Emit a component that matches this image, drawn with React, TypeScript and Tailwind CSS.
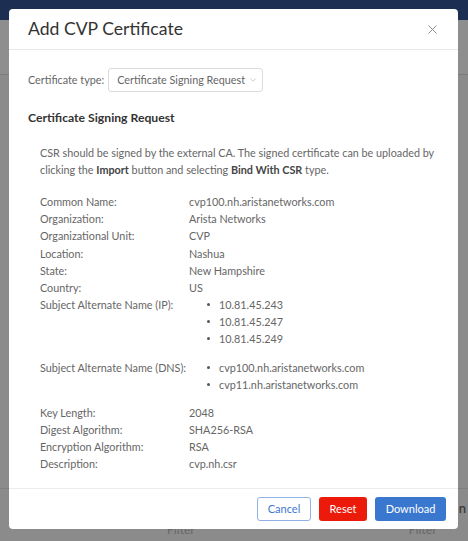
import { X, ChevronDown } from "lucide-react";

const details: [string, string][] = [
  ["Common Name:", "cvp100.nh.aristanetworks.com"],
  ["Organization:", "Arista Networks"],
  ["Organizational Unit:", "CVP"],
  ["Location:", "Nashua"],
  ["State:", "New Hampshire"],
  ["Country:", "US"],
];

const tail: [string, string][] = [
  ["Key Length:", "2048"],
  ["Digest Algorithm:", "SHA256-RSA"],
  ["Encryption Algorithm:", "RSA"],
  ["Description:", "cvp.nh.csr"],
];

function Row({ label, children }: { label: string; children: React.ReactNode }) {
  return (
    <div className="flex">
      <div className="w-[149px] shrink-0 whitespace-nowrap">{label}</div>
      <div>{children}</div>
    </div>
  );
}

function Bullets({ items }: { items: string[] }) {
  return (
    <ul className="pl-[18px]">
      {items.map((i) => (
        <li key={i} className="flex items-center">
          <span className="mr-[9px] h-[3px] w-[3px] rounded-full bg-[#555]" />
          <span>{i}</span>
        </li>
      ))}
    </ul>
  );
}

export default function App() {
  return (
    <div
      className="relative h-[541px] w-[468px] overflow-hidden bg-[#8b8b8b]"
      style={{ fontFamily: 'Lato, "Noto Sans", sans-serif' }}
    >
      {/* page behind the overlay */}
      <div className="h-[20px] bg-[#1c2f52]" />
      <div className="h-[55px] border-b border-[#7d7d7d] bg-[#8e8e8e]" />
      <div className="h-[414px] border-b border-[#7f7f7f]" />
      <div className="flex justify-end pr-[2px] pt-[10px] text-[13px] font-semibold text-[#3a3a3a]">n</div>
      <div className="flex pt-[2px] text-[12px] font-semibold text-[#6c6c6c]">
        <span className="ml-[167px]">Filter</span>
        <span className="ml-[214px]">Filter</span>
      </div>

      {/* modal */}
      <div className="absolute left-[9px] top-[9px] w-[449px] rounded-[4px] bg-white text-[10.8px] leading-[17.15px] text-[#666]">
        <div className="flex h-[41px] items-center justify-between border-b border-[#e8e8e8] pl-[19px] pr-[18px]">
          <h1 className="text-[17.6px] leading-none text-[#333]">Add CVP Certificate</h1>
          <X className="h-[15px] w-[15px] text-[#888]" strokeWidth={1.5} />
        </div>

        <div className="px-[19px] pt-[18px]">
          <div className="flex items-center">
            <span className="mr-[4px]">Certificate type:</span>
            <div className="flex h-[24px] items-center gap-[3px] whitespace-nowrap rounded-[3px] border border-[#dcdcdc] pl-[8px] pr-[4px]">
              <span>Certificate Signing Request</span>
              <ChevronDown className="h-[10px] w-[10px] text-[#aaa]" strokeWidth={1.5} />
            </div>
          </div>

          <h2 className="mt-[17px] text-[12.2px] font-bold text-[#333]">Certificate Signing Request</h2>

          <div className="pl-[12px] pt-[19px]">
            <p className="leading-[16.5px]">
              CSR should be signed by the external CA. The signed certificate can be uploaded by clicking the{" "}
              <b className="font-bold text-[#444]">Import</b> button and selecting{" "}
              <b className="font-bold text-[#444]">Bind With CSR</b> type.
            </p>

            <div className="mt-[15px]">
              {details.map(([l, v]) => (
                <Row key={l} label={l}>
                  {v}
                </Row>
              ))}
              <Row label="Subject Alternate Name (IP):">
                <Bullets items={["10.81.45.243", "10.81.45.247", "10.81.45.249"]} />
              </Row>
              <div className="mt-[11px]">
                <Row label="Subject Alternate Name (DNS):">
                  <Bullets items={["cvp100.nh.aristanetworks.com", "cvp11.nh.aristanetworks.com"]} />
                </Row>
              </div>
              <div className="mt-[11px]">
                {tail.map(([l, v]) => (
                  <Row key={l} label={l}>
                    {v}
                  </Row>
                ))}
              </div>
            </div>
          </div>
        </div>

        <div className="mt-[15px] flex justify-end gap-[8px] border-t border-[#ececec] px-[12px] py-[8px] text-[11px]">
          <button className="h-[24px] w-[54px] rounded-[3px] border border-[#8fb1e6] text-[#3a78d0]">Cancel</button>
          <button className="h-[24px] w-[48px] rounded-[3px] bg-[#ec1a0a] text-white">Reset</button>
          <button className="h-[24px] w-[71px] rounded-[3px] bg-[#3a78d0] text-white">Download</button>
        </div>
      </div>
    </div>
  );
}
